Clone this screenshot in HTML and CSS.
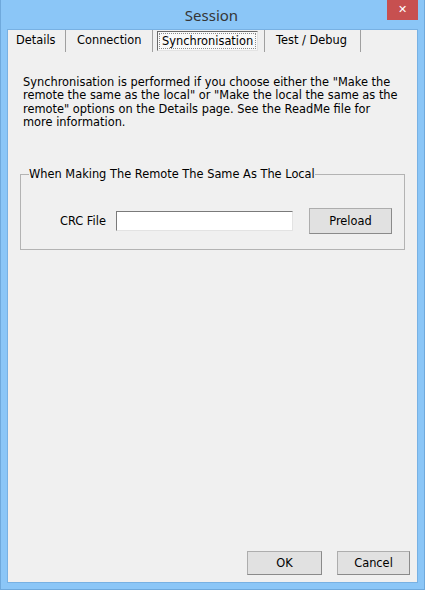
FILE: index.html
```html
<!DOCTYPE html>
<html lang="en">
  <head>
    <meta charset="utf-8"/>
    <title>Session</title>
    <link rel="stylesheet" href="styles.css">
  </head>
  <body>
    <div class="window">
      <div class="titlebar">
        <span></span>
        <span class="title">Session</span>
        <span class="close">&#x2715;</span>
      </div>
      <div class="client">
        <div class="tabs">
          <div class="tab t1">Details</div>
          <div class="tab t2">Connection</div>
          <div class="tab t3"><span class="current">Synchronisation</span></div>
          <div class="tab t4">Test / Debug</div>
        </div>
        <div class="page">
          <p class="info">Synchronisation is performed if you choose either the "Make the<br/>remote the same as the local" or "Make the local the same as the<br/>remote" options on the Details page. See the ReadMe file for<br/>more information.</p>
          <fieldset class="group">
            <legend>When Making The Remote The Same As The Local</legend>
            <div class="row">
              <label class="label">CRC File</label>
              <input class="field" type="text"/>
              <button class="btn preload">Preload</button>
            </div>
          </fieldset>
        </div>
        <div class="footer">
          <button class="btn ok">OK</button>
          <button class="btn cancel">Cancel</button>
        </div>
      </div>
    </div>
  </body>
</html>
```

FILE: styles.css
```css
html, body {
  margin: 0;
  padding: 0;
}
body {
  font-family: "DejaVu Sans", sans-serif;
  font-size: 11.4px;
  color: #000;
}
.window {
  width: 425px;
  height: 590px;
  box-sizing: border-box;
  background-color: #8bc6f7;
  border: solid 1px #6fa9dc;
  border-top: none;
  padding: 0 6px 6px 6px;
  display: flex;
  flex-direction: column;
}
.titlebar {
  height: 29px;
  display: grid;
  grid-template-columns: 1fr auto 1fr;
}
.title {
  font-family: "Noto Sans", sans-serif;
  font-size: 15px;
  color: #353535;
  line-height: 31px;
  margin-left: -2px;
}
.close {
  justify-self: end;
  width: 31px;
  height: 20px;
  background-color: #c75050;
  color: #fff;
  font-size: 11px;
  font-weight: bold;
  text-align: center;
  line-height: 20px;
}
.client {
  flex: 1;
  background-color: #f0f0f0;
  border: solid 1px #78b1e3;
  display: flex;
  flex-direction: column;
}
.tabs {
  display: flex;
  height: 22px;
}
.tab {
  box-sizing: border-box;
  border-right: solid 1px #a0a0a0;
  line-height: 21px;
  padding-left: 8px;
}
.t1 { width: 58px; }
.t2 { width: 87px; padding-left: 11px; }
.t3 { width: 112px; padding: 1px 0 0 4px; }
.t4 { width: 96px; padding-left: 11px; }
.current {
  display: block;
  width: 101px;
  height: 20px;
  box-sizing: border-box;
  border: solid 1px #696969;
  border-right-color: #e3e3e3;
  border-bottom-color: #e3e3e3;
  background-color: #f9f9f9;
  outline: dotted 1px #8a8a8a;
  outline-offset: -3px;
  line-height: 18px;
  padding-left: 4px;
  white-space: nowrap;
}
.page {
  padding: 0 13px 0 12px;
}
.info {
  margin: 24px 0 0 3px;
  line-height: 13.3px;
  white-space: nowrap;
}
.group {
  margin: 38px 0 0 0;
  padding: 0 12px 15px 12px;
  border: solid 1px #b3b3b3;
}
.group legend {
  padding: 0;
  margin-left: -4px;
}
.row {
  display: flex;
  align-items: center;
  margin-top: 27px;
}
.label {
  margin-left: 27px;
  width: 56px;
}
.field {
  width: 177px;
  height: 20px;
  box-sizing: border-box;
  border: solid 1px #7a7a7a;
  border-right-color: #e3e3e3;
  border-bottom-color: #e3e3e3;
  background-color: #fff;
  margin: 0;
}
.btn {
  box-sizing: border-box;
  font-family: "DejaVu Sans", sans-serif;
  font-size: 11.4px;
  color: #000;
  background-color: #e1e1e1;
  border: solid 1px #adadad;
  border-right-color: #8a8a8a;
  border-bottom-color: #8a8a8a;
  padding: 0;
  margin: 0;
}
.preload {
  width: 83px;
  height: 26px;
  margin-left: 16px;
}
.footer {
  margin-top: auto;
  display: flex;
  justify-content: flex-end;
  gap: 15px;
  padding: 0 7px 7px 0;
}
.ok {
  width: 75px;
  height: 24px;
}
.cancel {
  width: 73px;
  height: 24px;
}
```
